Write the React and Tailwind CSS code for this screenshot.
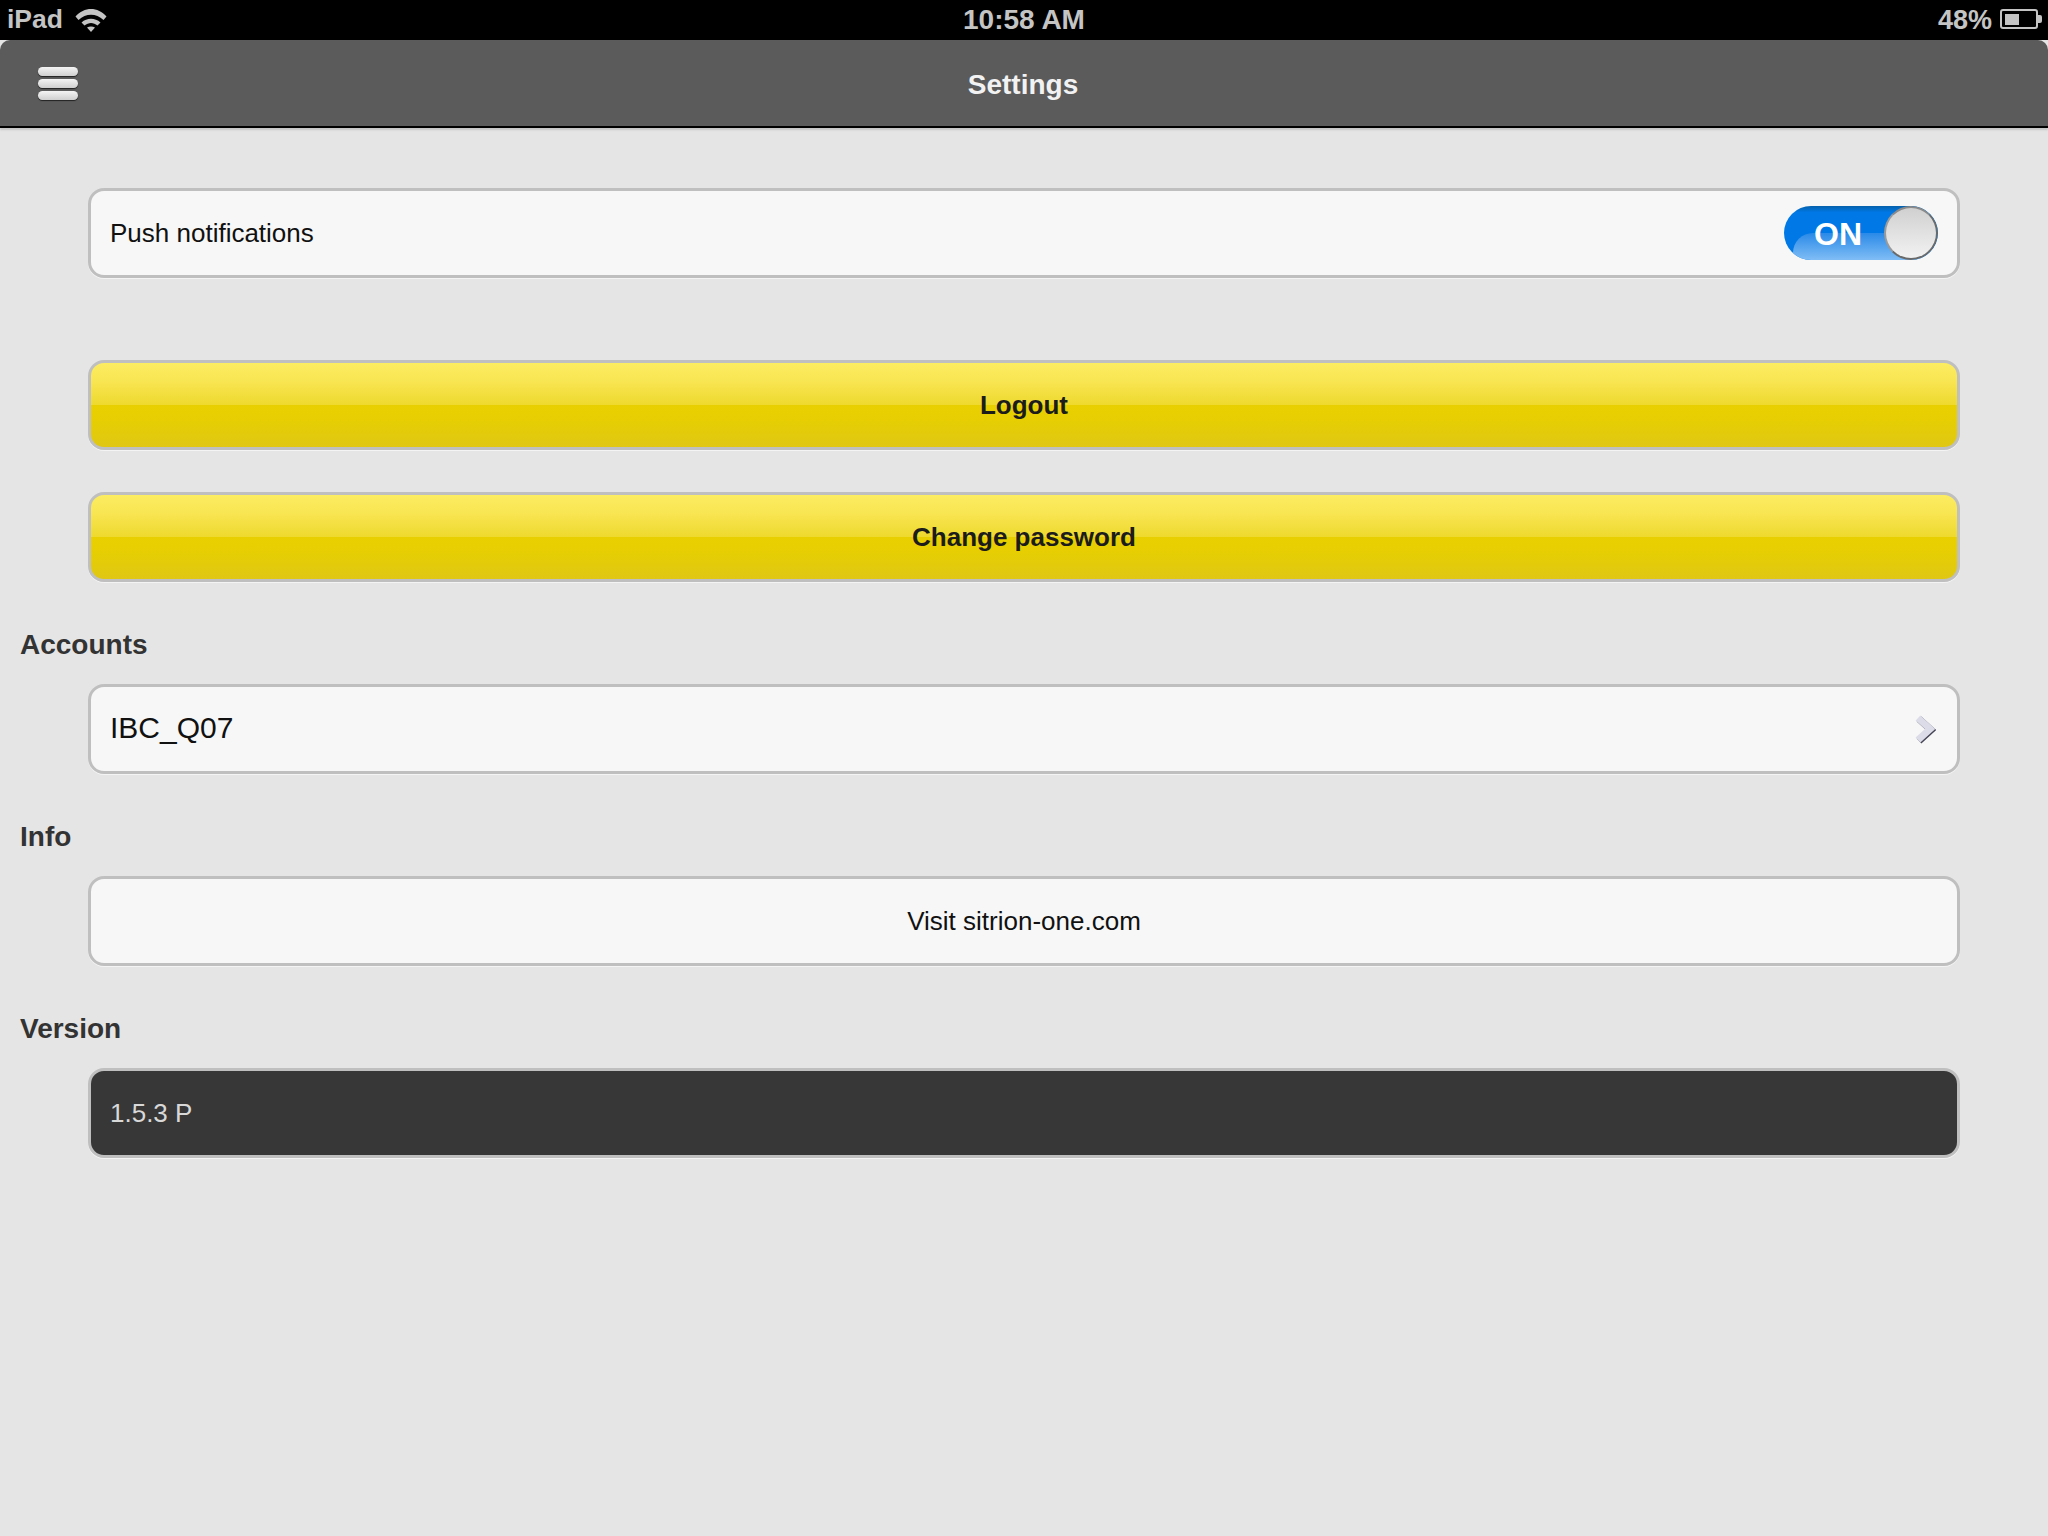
import React from "react";

const cardClass =
  "h-[90px] ml-[88px] mr-[88px] rounded-[16px] border-[3px] border-[#bfbfbf] flex items-center px-[19px] shadow-[0_1px_0_#f4f4f4]";

const YellowButton = ({ label, className }) => {
  return (
    <div
      className={`${cardClass} justify-center font-bold text-[26px] text-[#1c1c1c] bg-[linear-gradient(#fcec60_0%,#f9e654_20%,#eed92e_50%,#e8d000_50%,#e6ce04_70%,#dfc714_100%)] ${className}`}
    >
      {label}
    </div>
  );
};

const SectionLabel = ({ text, className }) => {
  return (
    <div className={`pl-5 h-[28px] leading-[28px] font-bold text-[28px] text-[#333333] ${className}`}>
      {text}
    </div>
  );
};

const Toggle = () => {
  return (
    <div className="relative w-[154px] h-[54px] rounded-full overflow-hidden bg-[linear-gradient(#0560ab_0%,#0079e6_12%,#0079e6_100%)]">
      <div className="absolute left-[9px] top-[27px] w-[130px] h-[27px] rounded-tl-[20px] bg-[linear-gradient(#2a8ae8,#80bdf5)]"></div>
      <span className="absolute left-[30px] top-[1px] h-[54px] leading-[54px] font-bold text-[32px] text-white">
        ON
      </span>
      <div className="absolute right-0 top-0 w-[54px] h-[54px] rounded-full border-2 border-[#6a6a6a] border-t-[#8a8a8a] border-l-[#9a9a9a] bg-[linear-gradient(#d0d0d0,#f2f2f2)]"></div>
    </div>
  );
};

const App = () => {
  return (
    <div className="w-[2048px] h-[1536px] overflow-hidden bg-[#e5e5e5] font-['Liberation_Sans',Arial,sans-serif]">
      {/* status bar */}
      <div className="h-10 bg-black flex items-center justify-between pl-[7px] pr-[6px] text-[#c4c4c4] font-bold text-[28px] relative">
        <div className="flex items-center gap-3">
          <span className="text-[26.5px]">iPad</span>
          <svg width="32" height="24" viewBox="0 0 32 24" fill="#c4c4c4">
            <path d="M0.5 8.5 C9 -1.5 23 -1.5 31.5 8.5 L28.5 12 C21 5 11 5 3.5 12 Z" />
            <path d="M6.5 14.5 C12 9.5 20 9.5 25.5 14.5 L22.5 17.5 C18.5 14 13.5 14 9.5 17.5 Z" />
            <path d="M12 19.5 C14.5 18 17.5 18 20 19.5 L16 24 Z" />
          </svg>
        </div>
        <div className="absolute left-0 right-0 text-center">10:58 AM</div>
        <div className="flex items-center gap-[8px] relative">
          <span className="text-[27px]">48%</span>
          <svg width="42" height="22" viewBox="0 0 42 22" fill="none">
            <rect x="1" y="1" width="36" height="18" rx="2" stroke="#c4c4c4" strokeWidth="2" />
            <rect x="5" y="5" width="14" height="11" fill="#c4c4c4" />
            <path d="M38 6 h2 a2 2 0 0 1 2 2 v4 a2 2 0 0 1 -2 2 h-2 z" fill="#c4c4c4" />
          </svg>
        </div>
      </div>

      {/* nav bar */}
      <div className="relative h-[88px] bg-[#5b5b5b] rounded-t-[10px] border-b-2 border-black shadow-[0_2px_2px_#c4c4c4] flex items-center justify-center">
        <div className="absolute left-[38px] top-[27px] flex flex-col gap-[3px]">
          <div className="w-[40px] h-[9px] rounded-full bg-[linear-gradient(#f4f4f4,#cfcfcf)] shadow-[0_1px_1px_#222222]"></div>
          <div className="w-[40px] h-[9px] rounded-full bg-[linear-gradient(#f4f4f4,#cfcfcf)] shadow-[0_1px_1px_#222222]"></div>
          <div className="w-[40px] h-[9px] rounded-full bg-[linear-gradient(#f4f4f4,#cfcfcf)] shadow-[0_1px_1px_#222222]"></div>
        </div>
        <span className="mt-[4px] mr-[2px] font-bold text-[28px] text-[#f2f2f2]">Settings</span>
      </div>

      <div className={`${cardClass} mt-[60px] bg-[#f7f7f7] justify-between pr-[19px] text-[26px] text-[#111111]`}>
        <span>Push notifications</span>
        <Toggle />
      </div>

      <YellowButton label="Logout" className="mt-[82px]" />
      <YellowButton label="Change password" className="mt-[42px]" />

      <SectionLabel text="Accounts" className="mt-[49px]" />
      <div className={`${cardClass} mt-[25px] bg-[#f7f7f7] justify-between text-[30px] text-[#111111]`}>
        <span className="mb-[4px]">IBC_Q07</span>
        <svg width="20" height="28" viewBox="0 0 20 28" className="mr-[3px] drop-shadow-[1px_1px_0_#444455]">
          <path d="M3 3 L15 14 L3 25" fill="none" stroke="#dcdce8" strokeWidth="7" strokeLinejoin="miter" />
        </svg>
      </div>

      <SectionLabel text="Info" className="mt-[49px]" />
      <div className={`${cardClass} mt-[25px] bg-[#f7f7f7] justify-center text-[26px] text-[#111111]`}>
        Visit sitrion-one.com
      </div>

      <SectionLabel text="Version" className="mt-[49px]" />
      <div className={`${cardClass} mt-[25px] bg-[#373737] text-[26px] text-[#d8d8d8]`}>
        1.5.3 P
      </div>
    </div>
  );
};

export default App;
